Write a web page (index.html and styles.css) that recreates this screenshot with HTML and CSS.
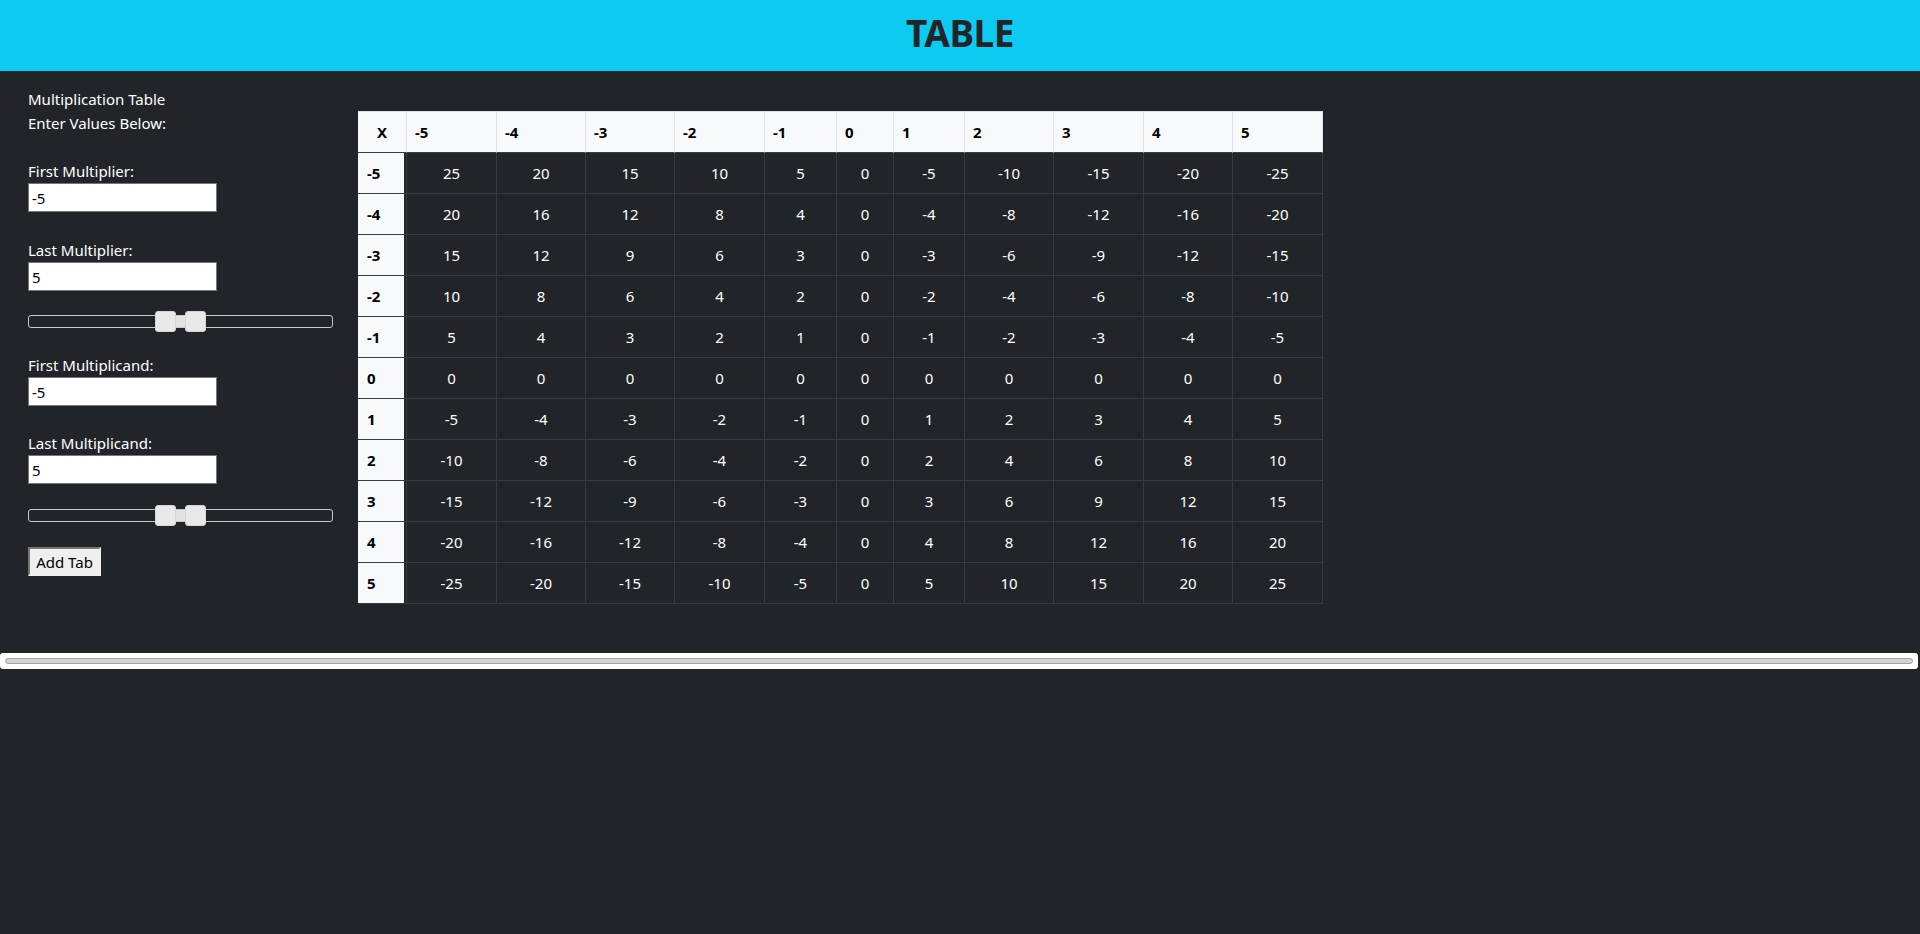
FILE: index.html
```html
<!DOCTYPE html>
<html lang="en">
<head>
<meta charset="utf-8">
<title>TABLE</title>
<link rel="stylesheet" href="styles.css">
</head>
<body>
<header class="topbar"><h1 class="title">TABLE</h1></header>
<main class="layout">
  <aside class="controls">
    <p class="intro">Multiplication Table<br>Enter Values Below:</p>
    <div class="field first">
      <label class="label" for="fm">First Multiplier:</label>
      <input class="num" id="fm" type="text" value="-5">
    </div>
    <div class="field second">
      <label class="label" for="lm">Last Multiplier:</label>
      <input class="num" id="lm" type="text" value="5">
    </div>
    <div class="slider">
      <div class="range" style="left:45%;width:10%"></div>
      <span class="handle" style="left:45%"></span>
      <span class="handle" style="left:55%"></span>
    </div>
    <div class="field">
      <label class="label" for="fc">First Multiplicand:</label>
      <input class="num" id="fc" type="text" value="-5">
    </div>
    <div class="field">
      <label class="label" for="lc">Last Multiplicand:</label>
      <input class="num" id="lc" type="text" value="5">
    </div>
    <div class="slider last">
      <div class="range" style="left:45%;width:10%"></div>
      <span class="handle" style="left:45%"></span>
      <span class="handle" style="left:55%"></span>
    </div>
    <button class="add-btn" type="button">Add Tab</button>
  </aside>
  <section class="table-wrap">
    <table class="mult">
      <thead>
        <tr><th class="corner">X</th><th>-5</th><th>-4</th><th>-3</th><th>-2</th><th>-1</th><th>0</th><th>1</th><th>2</th><th>3</th><th>4</th><th>5</th></tr>
      </thead>
      <tbody>
        <tr><th>-5</th><td>25</td><td>20</td><td>15</td><td>10</td><td>5</td><td>0</td><td>-5</td><td>-10</td><td>-15</td><td>-20</td><td>-25</td></tr>
        <tr><th>-4</th><td>20</td><td>16</td><td>12</td><td>8</td><td>4</td><td>0</td><td>-4</td><td>-8</td><td>-12</td><td>-16</td><td>-20</td></tr>
        <tr><th>-3</th><td>15</td><td>12</td><td>9</td><td>6</td><td>3</td><td>0</td><td>-3</td><td>-6</td><td>-9</td><td>-12</td><td>-15</td></tr>
        <tr><th>-2</th><td>10</td><td>8</td><td>6</td><td>4</td><td>2</td><td>0</td><td>-2</td><td>-4</td><td>-6</td><td>-8</td><td>-10</td></tr>
        <tr><th>-1</th><td>5</td><td>4</td><td>3</td><td>2</td><td>1</td><td>0</td><td>-1</td><td>-2</td><td>-3</td><td>-4</td><td>-5</td></tr>
        <tr><th>0</th><td>0</td><td>0</td><td>0</td><td>0</td><td>0</td><td>0</td><td>0</td><td>0</td><td>0</td><td>0</td><td>0</td></tr>
        <tr><th>1</th><td>-5</td><td>-4</td><td>-3</td><td>-2</td><td>-1</td><td>0</td><td>1</td><td>2</td><td>3</td><td>4</td><td>5</td></tr>
        <tr><th>2</th><td>-10</td><td>-8</td><td>-6</td><td>-4</td><td>-2</td><td>0</td><td>2</td><td>4</td><td>6</td><td>8</td><td>10</td></tr>
        <tr><th>3</th><td>-15</td><td>-12</td><td>-9</td><td>-6</td><td>-3</td><td>0</td><td>3</td><td>6</td><td>9</td><td>12</td><td>15</td></tr>
        <tr><th>4</th><td>-20</td><td>-16</td><td>-12</td><td>-8</td><td>-4</td><td>0</td><td>4</td><td>8</td><td>12</td><td>16</td><td>20</td></tr>
        <tr><th>5</th><td>-25</td><td>-20</td><td>-15</td><td>-10</td><td>-5</td><td>0</td><td>5</td><td>10</td><td>15</td><td>20</td><td>25</td></tr>
      </tbody>
    </table>
  </section>
</main>
<div class="tabs"><div class="tabs-nav"></div></div>
</body>
</html>
```
FILE: styles.css
```css
* { box-sizing: border-box; }

html, body {
  margin: 0;
  padding: 0;
  background: #212529;
  color: #fff;
  font-family: "Noto Sans", "Open Sans", "DejaVu Sans", sans-serif;
  font-size: 16px;
  line-height: 24px;
}

.topbar {
  height: 71px;
  background: #0dcaf0;
  display: flex;
  align-items: center;
  justify-content: center;
}

.title {
  margin: 0 0 5px 0;
  font-size: 37px;
  line-height: 44px;
  font-weight: 700;
  color: #212529;
  letter-spacing: -0.5px;
}

.layout {
  display: grid;
  grid-template-columns: 330px auto;
  align-items: start;
  padding: 16px 0 0 28px;
}

.controls {
  display: flex;
  flex-direction: column;
  align-items: flex-start;
}

.intro {
  margin: 0;
  font-size: 15px;
}

.field {
  display: flex;
  flex-direction: column;
  align-items: flex-start;
  margin-top: 25px;
}

.field.first { margin-top: 24px; }
.field.second { margin-top: 26px; }

.label {
  font-size: 15px;
  line-height: 24px;
}

.num {
  width: 189px;
  height: 29px;
  margin: 0;
  padding: 0 3px;
  border: 1px solid #767676;
  border-radius: 0;
  background: #fff;
  color: #000;
  font-family: inherit;
  font-size: 15px;
}

.slider {
  position: relative;
  width: 305px;
  height: 13px;
  margin-top: 24px;
  border: 1px solid #c8c8c8;
  border-radius: 3px;
}

.slider.last { margin-top: 25px; }

.range {
  position: absolute;
  top: 0;
  height: 11px;
  background: #e2e2e2;
}

.handle {
  position: absolute;
  top: -5px;
  width: 21px;
  height: 21px;
  margin-left: -10.5px;
  background: #e9e9e9;
  border: 1px solid #d5d5d5;
  border-radius: 3px;
}

.add-btn {
  margin-top: 25px;
  width: 73px;
  height: 29px;
  padding: 0;
  background: #efefef;
  color: #000;
  border: 2px solid #efefef;
  border-top-color: #767676;
  border-left-color: #767676;
  border-radius: 0;
  font-family: inherit;
  font-size: 15px;
}

.table-wrap {
  margin-top: 24px;
}

.mult {
  table-layout: fixed;
  width: 965px;
  border-collapse: separate;
  border-spacing: 0;
  font-size: 15px;
}

.mult th,
.mult td {
  height: 41px;
  padding: 8px;
  line-height: 24px;
  vertical-align: middle;
}

.mult thead th {
  background: #f8f9fa;
  color: #000;
  font-weight: 700;
  text-align: left;
  border-top: 1px solid #dee2e6;
  border-right: 1px solid #dee2e6;
  border-bottom: 1px solid #3a3e42;
}

.mult thead th.corner { text-align: center; }

.mult thead th:nth-child(1) { width: 49px; }
.mult thead th:nth-child(2) { width: 90px; }
.mult thead th:nth-child(3) { width: 89px; }
.mult thead th:nth-child(4) { width: 89px; }
.mult thead th:nth-child(5) { width: 90px; }
.mult thead th:nth-child(6) { width: 72px; }
.mult thead th:nth-child(7) { width: 57px; }
.mult thead th:nth-child(8) { width: 71px; }
.mult thead th:nth-child(9) { width: 89px; }
.mult thead th:nth-child(10) { width: 90px; }
.mult thead th:nth-child(11) { width: 89px; }
.mult thead th:nth-child(12) { width: 90px; }

.mult tbody th {
  background: #f8f9fa;
  color: #000;
  font-weight: 700;
  text-align: left;
  padding-left: 9px;
  border-right: 1px solid #373b3e;
  border-bottom: 1px solid #373b3e;
  box-shadow: inset -2px 0 0 #212529;
}

.mult tbody td {
  background: #212529;
  color: #fff;
  text-align: center;
  border-right: 1px solid #373b3e;
  border-bottom: 1px solid #373b3e;
}

.tabs {
  margin: 49px 2px 0 0;
  height: 16px;
  background: #fff;
  border-radius: 3px;
  padding: 5px 5px 0 5px;
}

.tabs-nav {
  height: 6px;
  background: #d3d3d3;
  border: 1px solid #a3a3a3;
  border-radius: 3px;
}
```
